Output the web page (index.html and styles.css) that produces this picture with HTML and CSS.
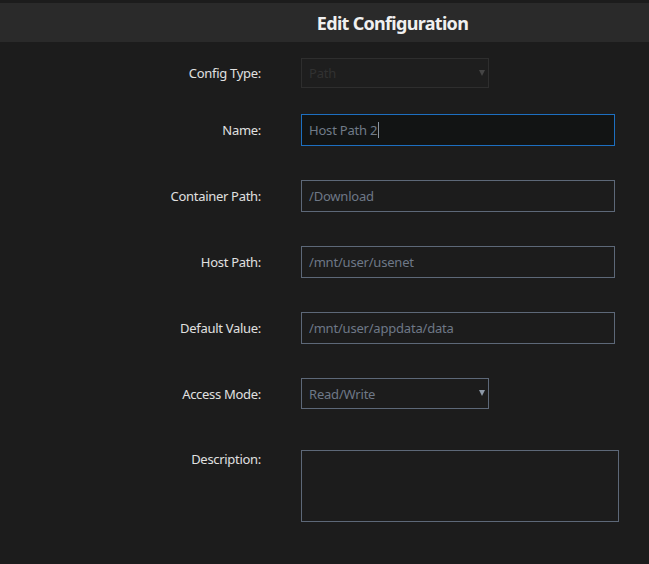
FILE: index.html
```html
<!DOCTYPE html>
<html lang="en">
<head>
    <meta charset="UTF-8">
    <meta name="viewport" content="width=device-width, initial-scale=1.0">
    <title>Edit Configuration</title>
    <link rel="stylesheet" href="styles.css">
</head>
<body>
    <div class="dialog">
        <div class="dialog-header">
            <h2>Edit Configuration</h2>
        </div>
        <form class="config-form">
            <div class="form-row row-type">
                <label for="configType">Config Type:</label>
                <span class="select-wrap disabled">
                    <select id="configType" disabled>
                        <option>Path</option>
                    </select>
                </span>
            </div>
            <div class="form-row row-name">
                <label for="name">Name:</label>
                <div class="field field-focus">Host Path 2<span class="caret"></span></div>
            </div>
            <div class="form-row">
                <label for="containerPath">Container Path:</label>
                <input type="text" id="containerPath" class="field" value="/Download">
            </div>
            <div class="form-row">
                <label for="hostPath">Host Path:</label>
                <input type="text" id="hostPath" class="field" value="/mnt/user/usenet">
            </div>
            <div class="form-row">
                <label for="defaultValue">Default Value:</label>
                <input type="text" id="defaultValue" class="field" value="/mnt/user/appdata/data">
            </div>
            <div class="form-row row-mode">
                <label for="accessMode">Access Mode:</label>
                <span class="select-wrap">
                    <select id="accessMode">
                        <option>Read/Write</option>
                        <option>Read Only</option>
                    </select>
                </span>
            </div>
            <div class="form-row row-desc">
                <label for="description">Description:</label>
                <textarea id="description"></textarea>
            </div>
        </form>
    </div>
</body>
</html>
```

FILE: styles.css
```css
/* Basic reset */
* {
    margin: 0;
    padding: 0;
    box-sizing: border-box;
}

body {
    font-family: "Noto Sans", "Open Sans", Arial, sans-serif;
    font-size: 13px;
    background: #1c1c1c;
    color: #e2e2e2;
    height: 100vh;
    overflow: hidden;
}

.dialog {
    padding-top: 3px;
}

/* Header band */
.dialog-header {
    background: #2a2a2a;
    height: 39px;
    display: flex;
    align-items: center;
    justify-content: center;
    padding-left: 136px;
}

.dialog-header h2 {
    font-size: 18px;
    font-weight: 700;
    color: #f0f0f0;
    letter-spacing: -0.7px;
}

/* Form rows */
.config-form {
    padding-top: 16px;
}

.form-row {
    display: grid;
    grid-template-columns: 261px 1fr;
    column-gap: 40px;
    align-items: center;
    margin-bottom: 34px;
}

.form-row label {
    text-align: right;
    color: #e0e0e0;
    letter-spacing: -0.3px;
}

.row-type {
    margin-bottom: 26px;
}

.row-mode {
    margin-bottom: 41px;
}

.row-desc {
    align-items: start;
}

/* Inputs */
.field,
textarea,
select {
    font-family: inherit;
    font-size: 13px;
    letter-spacing: -0.2px;
    color: #6e7887;
    background: #1c1c1c;
    border: 1px solid #5d6878;
    border-radius: 0;
    outline: none;
}

.field {
    width: 314px;
    height: 32px;
    padding: 0 7px;
}

.field-focus {
    display: flex;
    align-items: center;
    border-color: #1d6fc0;
    background: #121414;
    color: #707b88;
}

.caret {
    display: inline-block;
    width: 1px;
    height: 16px;
    margin-left: 1px;
    background: #8a95a2;
}

textarea {
    width: 318px;
    height: 72px;
    resize: none;
}

/* Selects with a small triangle */
.select-wrap {
    position: relative;
    display: block;
    width: 188px;
}

.select-wrap select {
    -webkit-appearance: none;
    appearance: none;
    width: 188px;
    height: 31px;
    padding: 0 7px;
}

.select-wrap::after {
    content: "";
    position: absolute;
    right: 4px;
    top: 12px;
    border-left: 3px solid transparent;
    border-right: 3px solid transparent;
    border-top: 6px solid #8d99a8;
    pointer-events: none;
}

.select-wrap.disabled select {
    height: 30px;
    color: #3b3b3b;
    background: #1f1f1f;
    border-color: #363636;
}

.select-wrap.disabled::after {
    border-top-color: #454545;
}
```
